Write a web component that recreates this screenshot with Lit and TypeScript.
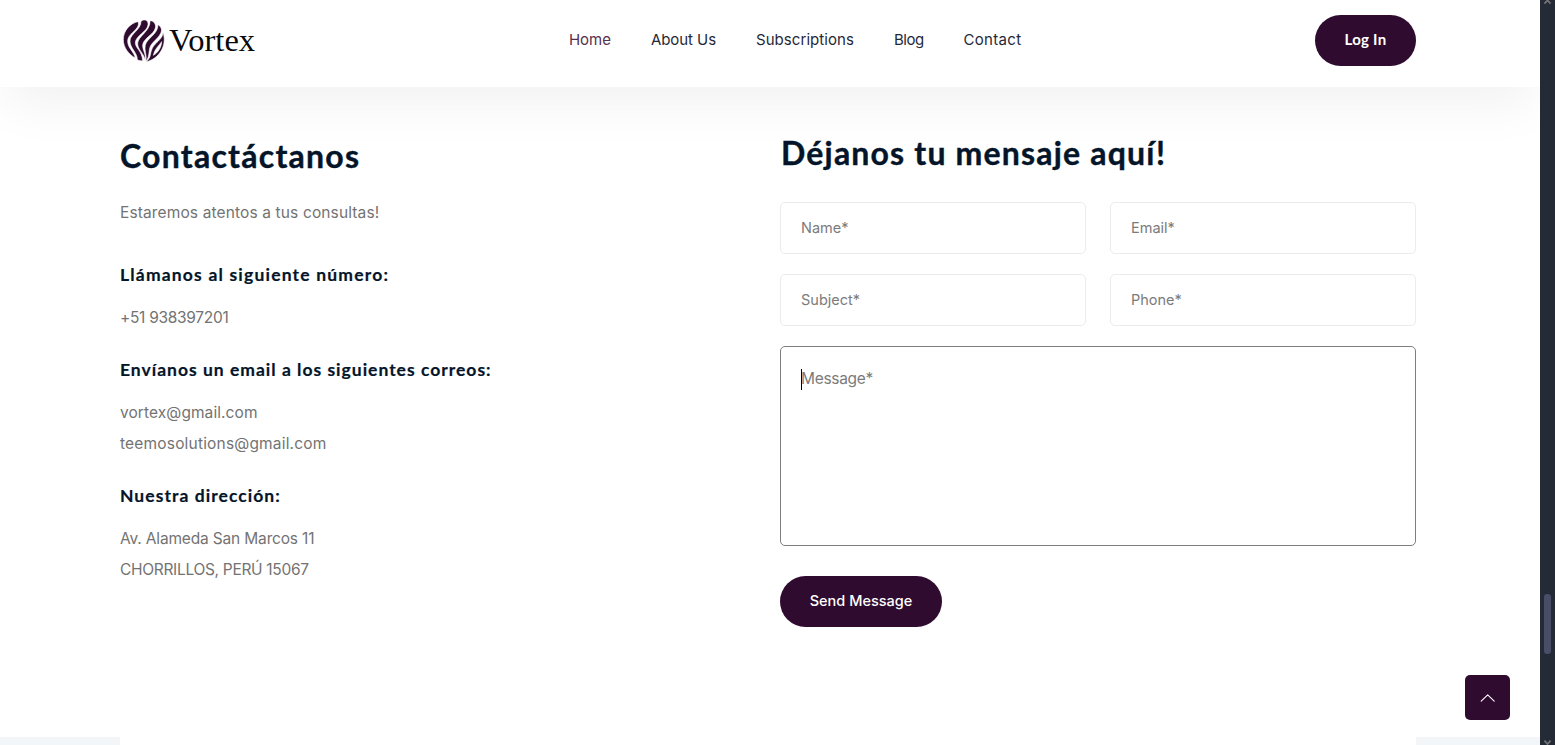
import { LitElement, html, css } from "lit";
import { customElement } from "lit/decorators.js";

@customElement("vortex-logo")
class VortexLogo extends LitElement {
  static styles = css`
    :host { display: flex; align-items: center; height: 50px; }
    svg { display: block; width: 52px; height: 50px; flex: none; }
    .word { font: 32.5px/50px "Liberation Serif", serif; color: #0a0a0a; margin-left: -1px; }
  `;
  render() {
    return html`
      <svg viewBox="0 0 156 150" fill="#2f0b2f" fill-rule="evenodd" stroke="#fff" stroke-width="1.8" aria-hidden="true">
        <g transform="translate(9 8)">
          <path d="M50 12C28 17 7 38 7 66C7 89 22 109 43 121C38 100 20 92 20 70C20 50 49 38 52 22C53 17 52 14 50 12Z"/>
          <path d="M60 11C71 2 83 8 81 22C79 41 45 54 43 74C42 92 63 98 65 129C60 130 54 129 49 126C49 104 27 92 27 70C27 48 61 36 60 11Z"/>
          <path d="M87 9C98 9 106 19 103 31C99 50 67 62 65 82C64 98 76 108 73 129C70 108 50 96 50 78C50 56 89 40 87 9Z"/>
          <path d="M111 21C121 26 124 38 119 47C111 65 90 74 86 92C83 106 85 118 75 131C78 112 69 98 73 82C79 60 111 50 111 21Z"/>
          <path d="M126 44C140 84 113 124 75 133C83 126 86 120 88 112C91 98 93 89 103 79C115 67 125 60 126 44ZM122 72C112 86 101 94 97 113C111 105 121 90 122 72Z"/>
        </g>
      </svg>
      <span class="word">Vortex</span>
    `;
  }
}

@customElement("site-header")
class SiteHeader extends LitElement {
  static styles = css`
    :host {
      display: grid; grid-template-columns: 451px 1fr auto; align-items: start; box-sizing: border-box; height: 87px;
      padding: 15px 124px 0 118px; background: #fff; position: relative;
      box-shadow: 0 25px 50px -7px rgba(0, 0, 0, .053);
      font-family: Inter, sans-serif;
    }
    nav { display: flex; gap: 40px; }
    nav a { font-size: 15px; line-height: 50px; color: #1f2937; white-space: nowrap; }
    nav .home { width: 42px; color: #54304f; letter-spacing: -.05px; }
    nav .about { width: 65px; letter-spacing: -.08px; }
    nav .subs { width: 98px; letter-spacing: .06px; }
    nav .blog { width: 29.5px; letter-spacing: -.5px; }
    nav .contact { letter-spacing: .33px; }
    .login {
      width: 101px; height: 51px; border: 0; border-radius: 26px; background: #2f0b2f; color: #fff;
      font: 700 15px/49px Lato, sans-serif; letter-spacing: .25px; padding: 0 0 2px;
    }
  `;
  render() {
    return html`
      <vortex-logo></vortex-logo>
      <nav>
        <a class="home">Home</a><a class="about">About Us</a><a class="subs">Subscriptions</a><a class="blog">Blog</a><a class="contact">Contact</a>
      </nav>
      <button class="login">Log In</button>
    `;
  }
}

@customElement("contact-info")
class ContactInfo extends LitElement {
  static styles = css`
    :host { display: block; padding-top: 4px; color: #737373; font: 15.5px/31px Inter, sans-serif; white-space: nowrap; }
    h2 { margin: 0 0 21px; color: #04152a; font: 700 32px/40px Lato, sans-serif; letter-spacing: 1.25px; -webkit-text-stroke: .4px #04152a; }
    h3 { margin: 24px 0 15px; color: #04152a; font: 700 17.5px/25px Lato, sans-serif; -webkit-text-stroke: .2px #04152a; }
    p { margin: 0; }
    .lead { letter-spacing: .13px; margin-bottom: 34px; }
    .call { letter-spacing: 1.19px; }
    .write { letter-spacing: 1px; }
    .visit { letter-spacing: 1.05px; }
    .phone { letter-spacing: -.3px; }
    .mail { letter-spacing: .08px; }
    .team { letter-spacing: .18px; }
    .street { letter-spacing: -.17px; }
    .city { letter-spacing: -.31px; }
  `;
  render() {
    return html`
      <h2>Contactáctanos</h2>
      <p class="lead">Estaremos atentos a tus consultas!</p>
      <h3 class="call">Llámanos al siguiente número:</h3>
      <p class="phone">+51 938397201</p>
      <h3 class="write">Envíanos un email a los siguientes correos:</h3>
      <p class="mail">vortex@gmail.com</p>
      <p class="team">teemosolutions@gmail.com</p>
      <h3 class="visit">Nuestra dirección:</h3>
      <p class="street">Av. Alameda San Marcos 11</p>
      <p class="city">CHORRILLOS, PERÚ 15067</p>
    `;
  }
}

@customElement("contact-form")
class ContactForm extends LitElement {
  static styles = css`
    :host { display: block; }
    h2 { margin: 1px 0 29px; padding-left: 1px; color: #04152a; font: 700 32px/40px Lato, sans-serif; letter-spacing: 1.18px; white-space: nowrap; -webkit-text-stroke: .4px #04152a; }
    .fields { display: grid; grid-template-columns: 1fr 1fr; gap: 20px 24px; }
    input, textarea {
      box-sizing: border-box; width: 100%; border: 1px solid #ececec; border-radius: 5px; outline: 0;
      background: #fff; padding: 0 20px 2px; font: 14.5px Inter, sans-serif; display: block; margin: 0;
    }
    input { height: 52px; }
    ::placeholder { color: #7b7b7b; opacity: 1; }
    .message { grid-column: 1 / -1; position: relative; }
    textarea { height: 200px; resize: none; border-color: #807d80; padding: 16px 20px; font-size: 15.5px; line-height: 31px; letter-spacing: -.3px; }
    .caret { position: absolute; left: 21px; top: 23px; width: 1px; height: 21px; background: #000; }
    .send {
      display: block; margin-top: 30px; width: 162px; height: 51px; border: 0; border-radius: 26px; padding: 0 0 2px;
      background: #2f0b2f; color: #fff; font: 500 14.5px/49px Inter, sans-serif;
    }
  `;
  render() {
    return html`
      <h2>Déjanos tu mensaje aquí!</h2>
      <div class="fields">
        <input placeholder="Name*"><input placeholder="Email*">
        <input placeholder="Subject*"><input placeholder="Phone*">
        <div class="message"><textarea placeholder="Message*"></textarea><span class="caret"></span></div>
      </div>
      <button class="send">Send Message</button>
    `;
  }
}

@customElement("app-root")
class AppRoot extends LitElement {
  static styles = css`
    :host { display: flex; height: 745px; overflow: hidden; background: #fff; }
    .page { flex: 1; display: flex; flex-direction: column; position: relative; min-width: 0; overflow: hidden; }
    main {
      flex: 1; display: grid; grid-template-columns: 636px 636px; gap: 24px; padding: 45px 0 0 120px;
      position: relative; z-index: 1;
    }
    site-header { z-index: 0; flex: none; }
    footer { height: 8px; background: #f2f6f9; padding: 0 124px 0 120px; }
    .panel { height: 8px; background: #fff; }
    .top {
      position: absolute; z-index: 2; right: 30px; bottom: 25px; width: 45px; height: 45px; border: 0; padding: 0;
      border-radius: 5px; background: #2f0b2f; display: grid; place-items: center;
    }
    .top svg, .rail svg { display: block; fill: none; }
    .rail {
      flex: none; box-sizing: border-box; width: 15px; background: #252a37; display: flex; flex-direction: column;
      align-items: flex-start; padding-left: 4px;
    }
    .thumb { width: 7px; height: 60px; border-radius: 3px; background: #4a4d66; margin: 590px 0 86px; }
  `;
  render() {
    return html`
      <div class="page">
        <site-header></site-header>
        <main>
          <contact-info></contact-info>
          <contact-form></contact-form>
        </main>
        <footer><div class="panel"></div></footer>
        <button class="top" aria-label="Subir">
          <svg width="16" height="16" viewBox="0 0 16 16"><path d="M1.2 11.2 7.7 4.9l6.5 6.3" stroke="#fff" stroke-width="1.1" stroke-linecap="round" stroke-linejoin="round"/></svg>
        </button>
      </div>
      <div class="rail">
        <svg width="7" height="4" viewBox="0 0 7 4"><path d="M.4 3.6 3.5.4l3.1 3.2" stroke="#737477" stroke-width="1.8"/></svg>
        <div class="thumb"></div>
        <svg width="7" height="5" viewBox="0 0 7 5"><path d="M.4 .6 3.5 4l3.1-3.4" stroke="#737477" stroke-width="1.8"/></svg>
      </div>
    `;
  }
}
